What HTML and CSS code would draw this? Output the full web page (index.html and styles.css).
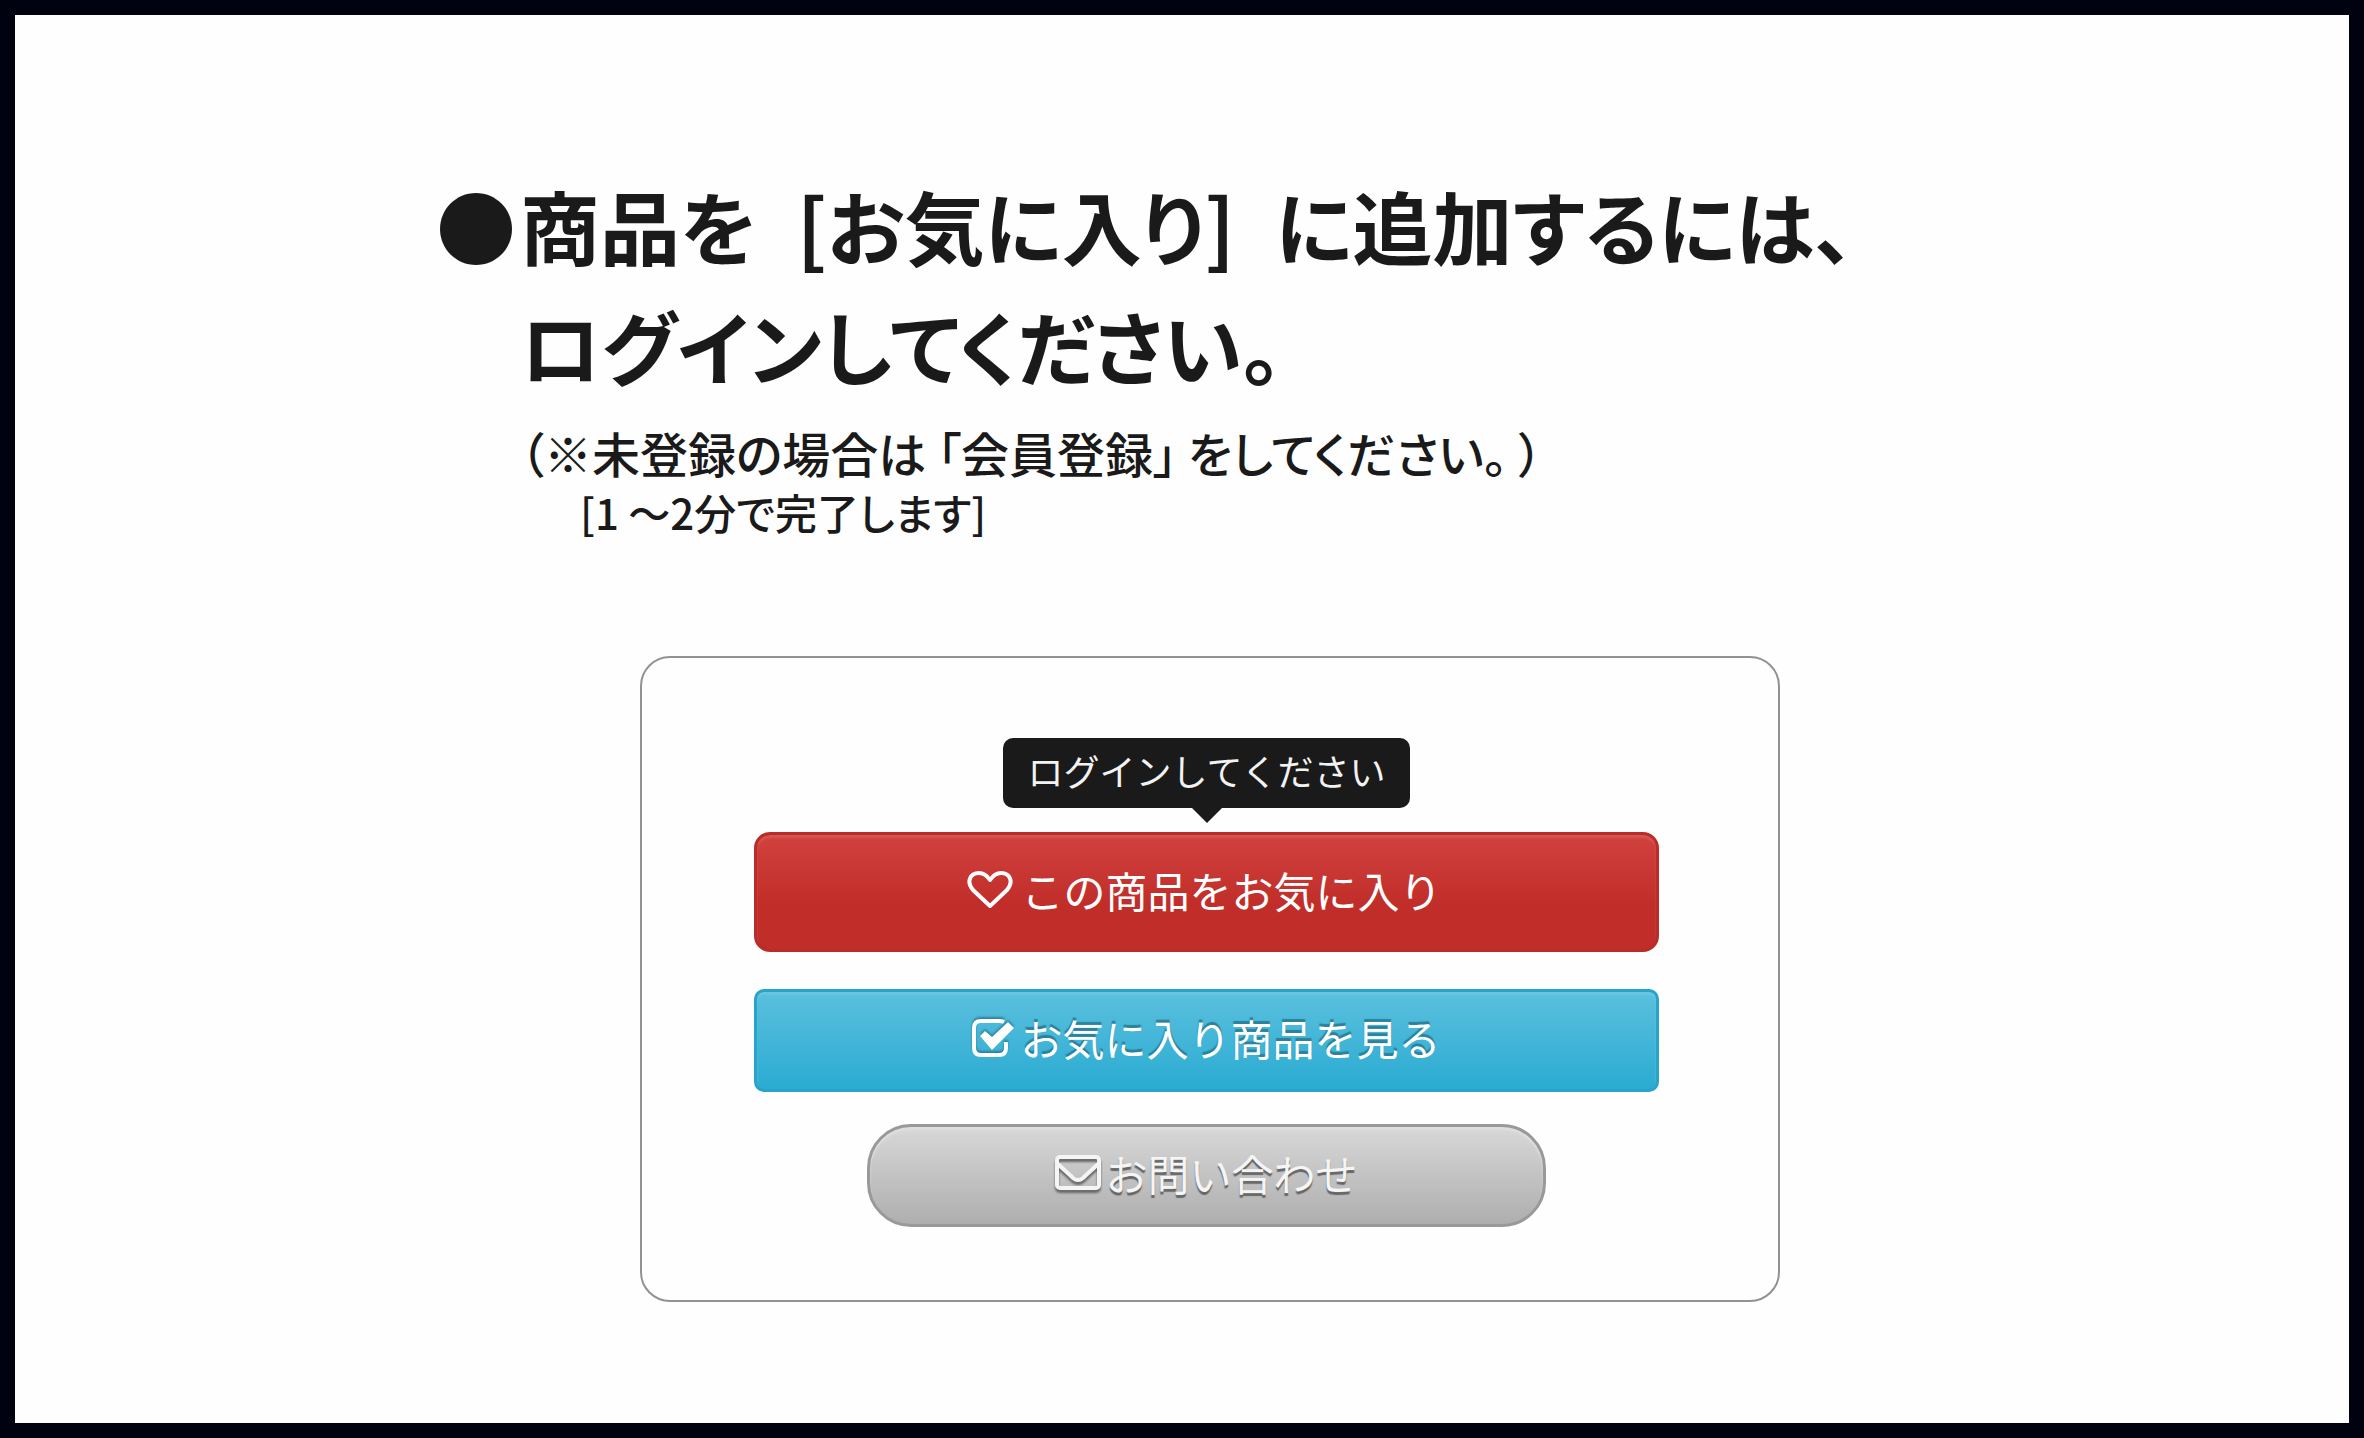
FILE: index.html
```html
<!DOCTYPE html>
<html lang="ja">
<head>
<meta charset="utf-8">
<meta name="viewport" content="width=device-width, initial-scale=1">
<title>お気に入りに追加するには</title>
<link rel="stylesheet" href="styles.css">
</head>
<body>
<main class="page">
  <header class="intro">
    <h1 class="title"><span class="bullet">●</span><span>商品を&ensp;[お気に入り]&ensp;に追加するには、<br>ログインしてください。</span></h1>
    <p class="note">（※未登録の場合は 「会員登録」 をしてください。 ）</p>
    <p class="time">[1 ～2分で完了します]</p>
  </header>
  <section class="card">
    <div class="tooltip" role="tooltip" id="login-tip">ログインしてください</div>
    <button class="btn btn-favorite" type="button" aria-describedby="login-tip">
      <svg class="icon icon-heart" viewBox="0 0 46 38" aria-hidden="true"><path d="M23 35 L6 19 C-1 11 3 2 12 2 C18 2 21 6 23 9 C25 6 28 2 34 2 C43 2 47 11 40 19 Z" fill="none" stroke="currentColor" stroke-width="4" stroke-linejoin="round"/></svg>
      <span>この商品をお気に入り</span>
    </button>
    <button class="btn btn-list" type="button">
      <svg class="icon icon-check" viewBox="0 0 42 38" aria-hidden="true"><path d="M34 23 V29 Q34 36 27 36 H9 Q2 36 2 29 V9 Q2 2 9 2 H27 Q30 2 32 3" fill="none" stroke="currentColor" stroke-width="4"/><path d="M8 17 L13 12 L20 18 L36 3 L42 9 L20 31 Z" fill="currentColor"/></svg>
      <span>お気に入り商品を見る</span>
    </button>
    <button class="btn btn-contact" type="button">
      <svg class="icon icon-mail" viewBox="0 0 46 36" aria-hidden="true"><rect x="2" y="2" width="42" height="31" rx="3" fill="none" stroke="currentColor" stroke-width="4"/><path d="M3 9 C8 14 13 18 18 23 Q23 27 28 23 C33 18 38 14 43 9" fill="none" stroke="currentColor" stroke-width="4"/></svg>
      <span>お問い合わせ</span>
    </button>
  </section>
</main>
</body>
</html>
```
FILE: styles.css
```css
* {
  box-sizing: border-box;
}

body {
  margin: 0;
  min-height: 100vh;
  border: 15px solid #00020f;
  background: #fefefe;
  color: #1a1a1a;
  font-family: "Noto Sans CJK JP", sans-serif;
}

.page {
  max-width: 1492px;
  margin: 0 auto;
  padding: 149px 0 120px;
}

.intro {
  font-feature-settings: "palt";
}

.title {
  display: flex;
  margin: 0;
  font-size: 80px;
  font-weight: 700;
  line-height: 120px;
}

.bullet {
  flex: 0 0 84px;
}

.note,
.time {
  margin: 0;
  font-weight: 500;
  line-height: 60px;
}

.note {
  padding: 18px 0 0 84px;
  font-size: 48px;
}

.time {
  padding-left: 144px;
  font-size: 42px;
}

.card {
  display: flex;
  flex-direction: column;
  align-items: center;
  max-width: 1140px;
  margin: 114px 0 0 204px;
  padding: 80px 119px 73px 112px;
  border: 2px solid #929292;
  border-radius: 30px;
}

.tooltip {
  position: relative;
  margin-bottom: 24px;
  padding: 0 25px 6px;
  border-radius: 10px;
  background: #1a1a1a;
  color: #f2f2f2;
  font-size: 36px;
  line-height: 64px;
}

.tooltip::after {
  content: "";
  position: absolute;
  top: 100%;
  left: 50%;
  margin-left: -15px;
  border: 15px solid transparent;
  border-top-color: #1a1a1a;
  border-bottom: 0;
}

.btn {
  display: flex;
  align-items: center;
  justify-content: center;
  gap: 8px;
  width: 100%;
  height: 103px;
  padding: 0 0 5px;
  border: 3px solid;
  color: #fff;
  font-family: inherit;
  font-size: 42px;
  line-height: 60px;
}

.btn-favorite {
  height: 120px;
  padding-right: 4px;
  border-color: #b92c28;
  border-radius: 16px;
  background: linear-gradient(#d2423f, #c12e2a 60%) border-box;
  box-shadow: inset 0 3px 2px #d55552;
}

.btn-list {
  gap: 6px;
  margin-top: 37px;
  border-color: #28a4c9;
  border-radius: 10px;
  background: linear-gradient(#5bc0de, #2aabd2);
  box-shadow: inset 0 3px 2px #69c6e1;
  text-shadow: 0 -3px 1px #2c8099;
}

.btn-contact {
  gap: 4px;
  width: 75%;
  margin-top: 32px;
  border-color: #999;
  border-radius: 44px;
  background: linear-gradient(#d8d8d8, #aeaeae);
  box-shadow: inset 0 3px 2px #dedede;
  color: #f5f5f5;
  text-shadow: 0 3px 1px #666;
}

.icon {
  flex: none;
}

.icon-heart {
  width: 46px;
  height: 38px;
}

.icon-check {
  width: 42px;
  height: 38px;
  filter: drop-shadow(0 -2px 1px #2c8099);
}

.icon-mail {
  width: 46px;
  height: 36px;
  filter: drop-shadow(0 3px 1px #666);
}
```
